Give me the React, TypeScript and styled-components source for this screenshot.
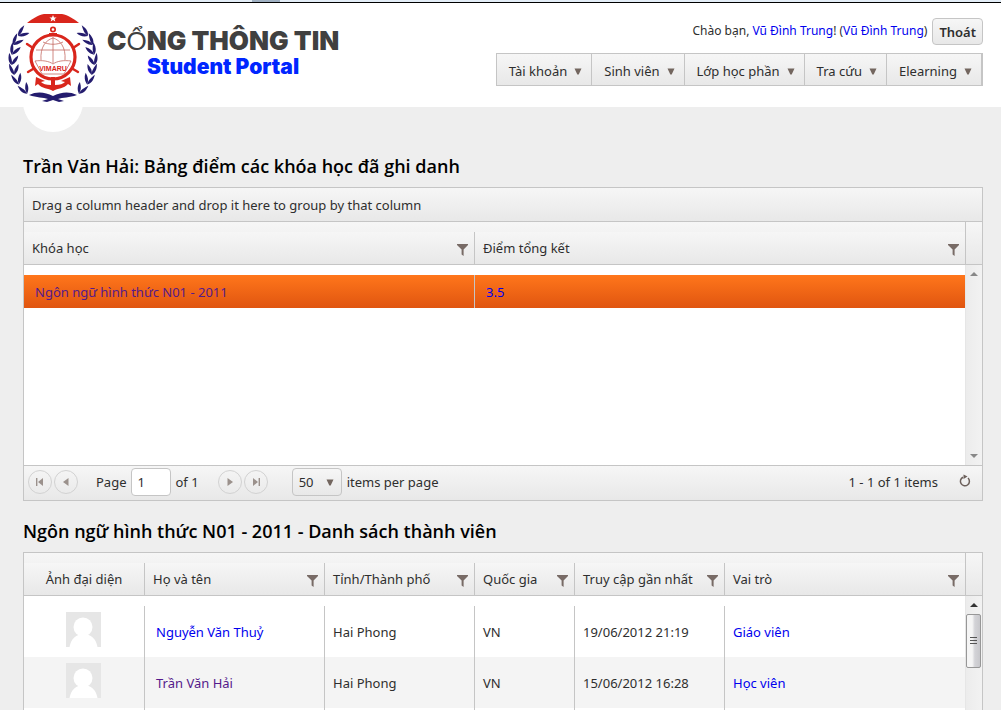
import React from "react";
import styled, { createGlobalStyle, css } from "styled-components";

const line = "#c5c5c5";
const bar = "linear-gradient(#f6f6f6, #e8e8e8)";

const GlobalStyle = createGlobalStyle`
  * { box-sizing: border-box; }
  body {
    margin: 0;
    background: #eeeeee;
    color: #2e2e2e;
    font: 13px/20px "Noto Sans", "Open Sans", sans-serif;
  }
  button, input, select { font: inherit; color: inherit; }
`;

const Page = styled.div`
  height: 100vh;
  overflow: hidden;
  display: flex;
  flex-direction: column;
`;

const WindowEdge = styled.div`
  flex: none;
  height: 3px;
  display: flex;
  background: #e3edf7;
  border-bottom: 1px solid #000;
`;

const EdgeTab = styled.div`
  width: 28px;
  margin-left: 252px;
  background: #9fb0c2;
`;

const Header = styled.header`
  flex: none;
  height: 104px;
  padding: 10px 18px 0 8px;
  display: flex;
  justify-content: space-between;
  background: #fff;
`;

const Brand = styled.div`
  position: relative;
  display: flex;
  gap: 9px;
`;

const Bump = styled.div`
  position: absolute;
  left: 15px;
  top: 59px;
  width: 60px;
  height: 60px;
  border-radius: 50%;
  background: #fff;
`;

const Emblem = styled.svg`
  position: relative;
  width: 90px;
  height: 91px;
`;

const BrandText = styled.div`
  display: flex;
  flex-direction: column;
  align-items: center;
  padding-top: 12px;
  font-family: Inter, sans-serif;
  font-weight: 900;
`;

const BrandTitle = styled.div`
  font-size: 26px;
  line-height: 32px;
  color: #404040;
  white-space: nowrap;
`;

const Thin = styled.span`
  font-family: "Liberation Sans", sans-serif;
  font-weight: 400;
`;

const BrandSub = styled.div`
  font-size: 21px;
  line-height: 20px;
  color: #0026ff;
`;

const Tools = styled.div`
  display: flex;
  flex-direction: column;
  align-items: flex-end;
  gap: 8px;
  padding-top: 5px;
`;

const Greeting = styled.div`
  display: flex;
  gap: 5px;
  font-size: 12px;
`;

const Message = styled.span`
  padding-top: 3px;
`;

const Link = styled.a<{ $visited?: boolean; $inset?: boolean }>`
  color: ${(p) => (p.$visited ? "#551a8b" : "#0000ee")};
  padding-left: ${(p) => (p.$inset ? 3 : 0)}px;
  text-decoration: none;
`;

const ExitButton = styled.button`
  height: 27px;
  padding: 0 6px;
  border: 1px solid ${line};
  border-radius: 4px;
  background: ${bar};
  font-size: 13px;
  font-weight: 600;
`;

const Menu = styled.nav`
  display: flex;
  border: 1px solid ${line};
  border-right-width: 2px;
  background: ${bar};
`;

const MenuItem = styled.button`
  display: flex;
  align-items: center;
  gap: 7px;
  height: 31px;
  padding: 3px 9px 0 12px;
  border: 0;
  background: none;
  & + & { border-left: 1px solid ${line}; }
`;

const Main = styled.main`
  flex: 1;
  min-height: 0;
  display: flex;
  flex-direction: column;
  padding: 48px 18px 0 23px;
`;

const Title = styled.h1`
  flex: none;
  margin: 0;
  height: 32px;
  font-family: "Open Sans", "Noto Sans", sans-serif;
  font-size: 18px;
  line-height: 22px;
  font-weight: 600;
  color: #000;
`;

const Grid = styled.section<{ $fill?: boolean }>`
  flex: ${(p) => (p.$fill ? "1 0 0" : "none")};
  min-height: 0;
  display: flex;
  flex-direction: column;
  margin-bottom: ${(p) => (p.$fill ? 0 : 19)}px;
  border: 1px solid ${line};
  border-bottom-width: ${(p) => (p.$fill ? 0 : 1)}px;
  background: #fff;
`;

const GroupBar = styled.div`
  height: 34px;
  padding: 7px 8px;
  border-bottom: 1px solid ${line};
  background: ${bar};
`;

const GridHead = styled.div`
  flex: none;
  height: 43px;
  display: flex;
  border-bottom: 1px solid ${line};
  background: ${bar};
`;

const HeadCorner = styled.div`
  flex: none;
  width: 17px;
  border-left: 1px solid ${line};
`;

const GridBody = styled.div<{ $fill?: boolean }>`
  display: flex;
  overflow: hidden;
  ${(p) => (p.$fill ? css`flex: 1;` : css`height: 200px;`)}
`;

const Pane = styled.div`
  flex: 1;
  padding-top: 10px;
`;

const Table = styled.table`
  width: 100%;
  table-layout: fixed;
  border-collapse: separate;
  border-spacing: 0;
`;

const HeadCell = styled.th`
  height: 32px;
  padding: 0 8px;
  background: ${bar};
  font-weight: 400;
  text-align: left;
  & + & { border-left: 1px solid ${line}; }
`;

const HeadLabel = styled.div<{ $center?: boolean }>`
  display: flex;
  justify-content: ${(p) => (p.$center ? "center" : "space-between")};
  align-items: center;
  margin-right: ${(p) => (p.$center ? 0 : -2)}px;
  white-space: nowrap;
  svg { margin-top: 4px; }
`;

const Row = styled.tr<{ $tone?: "selected" | "alt" }>`
  ${(p) => p.$tone === "selected" && css`background: linear-gradient(#ff761b, #e05510);`}
  ${(p) => p.$tone === "alt" && css`background: #f4f4f4;`}
`;

const Cell = styled.td<{ $tall?: boolean; $center?: boolean }>`
  height: ${(p) => (p.$tall ? 51 : 33)}px;
  padding: 0 8px;
  text-align: ${(p) => (p.$center ? "center" : "left")};
  & + & { border-left: 1px solid ${line}; }
`;

const Avatar = styled.svg`
  display: block;
  width: 35px;
  height: 35px;
  margin: 0 auto 5px 34px;
  background: #e6e6e6;
`;

const Track = styled.div`
  flex: none;
  width: 17px;
  display: flex;
  flex-direction: column;
  align-items: center;
  padding: 6px 1px 6px 0;
  border-left: 1px solid #e6e6e6;
  background: linear-gradient(90deg, #ececec, #f2f2f2);
`;

const Thumb = styled.div`
  width: 15px;
  height: 54px;
  margin-top: 7px;
  display: flex;
  align-items: center;
  justify-content: center;
  border: 1px solid #979797;
  border-radius: 2px;
  background: linear-gradient(90deg, #f5f5f5 40%, #d3d3d7 60%, #c8c8cc);
`;

const Spacer = styled.div`
  flex: 1;
`;

const Pager = styled.div`
  display: flex;
  align-items: center;
  height: 35px;
  padding: 0 10px 2px 4px;
  border-top: 1px solid ${line};
  background: ${bar};
`;

const PageButton = styled.button`
  display: flex;
  align-items: center;
  justify-content: center;
  width: 24px;
  height: 24px;
  margin-right: 2px;
  padding: 0;
  border: 1px solid #d2d2d2;
  border-radius: 50%;
  background: none;
`;

const PageField = styled.label`
  display: flex;
  align-items: center;
  gap: 4px;
  margin: 0 5px 0 16px;
`;

const PageInput = styled.input`
  width: 40px;
  height: 28px;
  padding: 0 6px;
  border: 1px solid ${line};
  border-radius: 4px;
  background: #fff;
`;

const OfPages = styled.span`
  margin-right: 19px;
`;

const SizeField = styled.label`
  display: flex;
  align-items: center;
  gap: 5px;
  margin-left: 22px;
`;

const SizeBox = styled.span`
  position: relative;
  display: flex;
  align-items: center;
`;

const SizeSelect = styled.select`
  appearance: none;
  width: 50px;
  height: 28px;
  padding: 0 6px;
  border: 1px solid ${line};
  border-radius: 4px;
  background: ${bar};
`;

const SizeArrow = styled.span`
  position: absolute;
  right: 8px;
  display: flex;
  pointer-events: none;
`;

const RefreshButton = styled.button`
  display: flex;
  margin-left: 20px;
  padding: 0 0 2px;
  border: 0;
  background: none;
`;

const Caret = () => (
  <svg width="8" height="7" viewBox="0 0 8 7"><path d="M0.5 0.5H7.5L4.7 6.5H3.3Z" fill="#73665f" /></svg>
);

const Funnel = () => (
  <svg width="11" height="12" viewBox="0 0 11 12"><path d="M0 0H11V1L6.6 5.4V12L4.6 10.400V5.4L0 1Z" fill="#786b66" /></svg>
);

const ScrollArrow = ({ down, color = "#555" }: { down?: boolean; color?: string }) => (
  <svg width="8" height="5" viewBox="0 0 8 5"><path d={down ? "M0 0H8L4 4Z" : "M0 5H8L4 1Z"} fill={color} /></svg>
);

const pagerIcons = {
  first: "M1 1H2.4V9H1ZM8 1V9L3 5Z",
  prev: "M7.5 1V9L2 5Z",
  next: "M2.5 1V9L8 5Z",
  last: "M7.6 1H9V9H7.6ZM2 1V9L7 5Z",
};

const PagerButton = ({ kind, label }: { kind: keyof typeof pagerIcons; label: string }) => (
  <PageButton aria-label={label}>
    <svg width="10" height="10" viewBox="0 0 10 10"><path d={pagerIcons[kind]} fill="#9b918c" /></svg>
  </PageButton>
);

// Leaf pairs along the left branch: x, y and the tilt of each pair.
const leaves = [
  [15, 18, 44], [9, 26, 34], [6, 35, 18], [4, 45, 4], [5, 55, -10], [8, 65, -24], [15, 75, -36],
];

const Wreath = () => (
  <g fill="#241c6e">
    {leaves.map(([x, y, tilt]) => (
      <g key={y} transform={`translate(${x} ${y}) rotate(${tilt})`}>
        <path d="M0 7C-4 4-4-1-3-5C-1-1 1 3 0 7Z" />
        <path d="M0 7C0 3 2 0 6-3C6 1 4 5 0 7Z" />
      </g>
    ))}
  </g>
);

const Logo = () => (
  <Emblem viewBox="0 0 90 91" role="img" aria-label="VIMARU">
    <circle cx="45" cy="45" r="42" fill="#fff" />
    <path d="M19 10C24 6 30 2 36 1H54C60 2 66 6 71 10Z" fill="#d9261c" />
    <path d="M45 2L46 4.500H48.600L46.600 6L47.300 8.500L45 7L42.700 8.500L43.400 6L41.400 4.500H44Z" fill="#fff" />
    <Wreath />
    <g transform="translate(90 0) scale(-1 1)"><Wreath /></g>
    <path d="M21 82C29 78 37 79 45 83C53 79 61 78 69 82C61 85 55 84 50 86L56 88L51 89L45 87L39 89L34 88L40 86C35 84 29 85 21 82Z" fill="#241c6e" />
    <g stroke="#d9261c" strokeWidth="2.400" strokeLinecap="round">
      <path d="M25 35L19 31M65 35L71 31M25 56L20 59M65 56L70 59" />
    </g>
    <circle cx="45" cy="44" r="22" fill="#fff" stroke="#d9261c" strokeWidth="3.200" />
    <circle cx="45" cy="16.500" r="2.200" fill="#fff" stroke="#d9261c" strokeWidth="1.700" />
    <path d="M41 20H49V22H41Z" fill="#d9261c" />
    <g fill="none" stroke="#c46a62" strokeWidth="0.800">
      <path d="M45 24V50M33 47C32 34 38 27 45 25C52 27 58 34 57 47M28 37H62M35 29C41 32 49 32 55 29" />
      <path d="M27 48L34 61H56L63 48C56 47 49 48 45 51C41 48 34 47 27 48" />
    </g>
    <text x="45" y="58" textAnchor="middle" fontFamily="Liberation Sans, sans-serif" fontWeight="700" fontSize="7" fill="#d9261c">VIMARU</text>
    <path d="M43 64H47V72C52 72 55 71 57 69L53 68L62 64L63 73L60 71C56 76 50 75 45 78C40 75 34 76 30 71L27 73L28 64L37 68L33 69C35 71 38 72 43 72Z" fill="#d9261c" />
  </Emblem>
);

const FilterHead = ({ children }: { children: React.ReactNode }) => (
  <HeadCell scope="col"><HeadLabel>{children}<Funnel /></HeadLabel></HeadCell>
);

const Columns = ({ widths }: { widths: number[] }) => (
  <colgroup>{widths.map((w, i) => <col key={i} width={w} />)}<col /></colgroup>
);

const courseColumns = [450];
const memberColumns = [120, 180, 150, 100, 150];

const members = [
  { name: "Nguyễn Văn Thuỷ", city: "Hai Phong", country: "VN", seen: "19/06/2012 21:19", role: "Giáo viên", visited: false },
  { name: "Trần Văn Hải", city: "Hai Phong", country: "VN", seen: "15/06/2012 16:28", role: "Học viên", visited: true },
];

export default function App() {
  return (
    <Page>
      <GlobalStyle />
      <WindowEdge><EdgeTab /></WindowEdge>
      <Header>
        <Brand>
          <Bump />
          <Logo />
          <BrandText>
            <BrandTitle>C<Thin>Ổ</Thin>NG THÔNG TIN</BrandTitle>
            <BrandSub>Student Portal</BrandSub>
          </BrandText>
        </Brand>
        <Tools>
          <Greeting>
            <Message>
              Chào bạn, <Link href="#me">Vũ Đình Trung</Link>! (<Link href="#account">Vũ Đình Trung</Link>)
            </Message>
            <ExitButton>Thoát</ExitButton>
          </Greeting>
          <Menu>
            {["Tài khoản", "Sinh viên", "Lớp học phần", "Tra cứu", "Elearning"].map((label) => (
              <MenuItem key={label}>{label}<Caret /></MenuItem>
            ))}
          </Menu>
        </Tools>
      </Header>
      <Main>
        <Title>Trần Văn Hải: Bảng điểm các khóa học đã ghi danh</Title>
        <Grid>
          <GroupBar>Drag a column header and drop it here to group by that column</GroupBar>
          <GridHead>
            <Pane>
              <Table>
                <Columns widths={courseColumns} />
                <thead>
                  <tr><FilterHead>Khóa học</FilterHead><FilterHead>Điểm tổng kết</FilterHead></tr>
                </thead>
              </Table>
            </Pane>
            <HeadCorner />
          </GridHead>
          <GridBody>
            <Pane>
              <Table>
                <Columns widths={courseColumns} />
                <tbody>
                  <Row $tone="selected">
                    <Cell><Link href="#course" $visited $inset>Ngôn ngữ hình thức N01 - 2011</Link></Cell>
                    <Cell><Link href="#score" $inset>3.5</Link></Cell>
                  </Row>
                </tbody>
              </Table>
            </Pane>
            <Track>
              <ScrollArrow color="#888" />
              <Spacer />
              <ScrollArrow down color="#888" />
            </Track>
          </GridBody>
          <Pager>
            <PagerButton kind="first" label="First page" />
            <PagerButton kind="prev" label="Previous page" />
            <PageField>Page<PageInput defaultValue="1" /></PageField>
            <OfPages>of 1</OfPages>
            <PagerButton kind="next" label="Next page" />
            <PagerButton kind="last" label="Last page" />
            <SizeField>
              <SizeBox>
                <SizeSelect defaultValue="50"><option>50</option></SizeSelect>
                <SizeArrow><Caret /></SizeArrow>
              </SizeBox>
              items per page
            </SizeField>
            <Spacer />
            <span>1 - 1 of 1 items</span>
            <RefreshButton aria-label="Refresh">
              <svg width="14" height="14" viewBox="0 0 14 14">
                <path d="M10 4A4.500 4.500 0 1 1 5 3.200" fill="none" stroke="#6b5f5a" strokeWidth="1.500" />
                <path d="M5.500 0.500L9.500 2.600L5.500 5Z" fill="#6b5f5a" />
              </svg>
            </RefreshButton>
          </Pager>
        </Grid>
        <Title as="h2">Ngôn ngữ hình thức N01 - 2011 - Danh sách thành viên</Title>
        <Grid $fill>
          <GridHead>
            <Pane>
              <Table>
                <Columns widths={memberColumns} />
                <thead>
                  <tr>
                    <HeadCell scope="col"><HeadLabel $center>Ảnh đại diện</HeadLabel></HeadCell>
                    <FilterHead>Họ và tên</FilterHead>
                    <FilterHead>Tỉnh/Thành phố</FilterHead>
                    <FilterHead>Quốc gia</FilterHead>
                    <FilterHead>Truy cập gần nhất</FilterHead>
                    <FilterHead>Vai trò</FilterHead>
                  </tr>
                </thead>
              </Table>
            </Pane>
            <HeadCorner />
          </GridHead>
          <GridBody $fill>
            <Pane>
              <Table>
                <Columns widths={memberColumns} />
                <tbody>
                  {members.map((m) => (
                    <Row key={m.name} $tone={m.visited ? "alt" : undefined}>
                      <Cell $tall $center>
                        <Avatar viewBox="0 0 35 35">
                          <circle cx="17" cy="15" r="9.500" fill="#fff" />
                          <path d="M3.500 35C5 27 10 22 17.500 22C25 22 30 27 31.500 35Z" fill="#fff" />
                        </Avatar>
                      </Cell>
                      <Cell $tall><Link href="#member" $visited={m.visited} $inset>{m.name}</Link></Cell>
                      <Cell $tall>{m.city}</Cell>
                      <Cell $tall>{m.country}</Cell>
                      <Cell $tall>{m.seen}</Cell>
                      <Cell $tall><Link href="#role">{m.role}</Link></Cell>
                    </Row>
                  ))}
                  <Row>
                    {[0, 1, 2, 3, 4, 5].map((i) => <Cell key={i} $tall />)}
                  </Row>
                </tbody>
              </Table>
            </Pane>
            <Track>
              <ScrollArrow color="#333" />
              <Thumb>
                <svg width="7" height="8" viewBox="0 0 7 8"><path d="M0 0.500H7M0 3.500H7M0 6.500H7" stroke="#555" /></svg>
              </Thumb>
            </Track>
          </GridBody>
        </Grid>
      </Main>
    </Page>
  );
}
